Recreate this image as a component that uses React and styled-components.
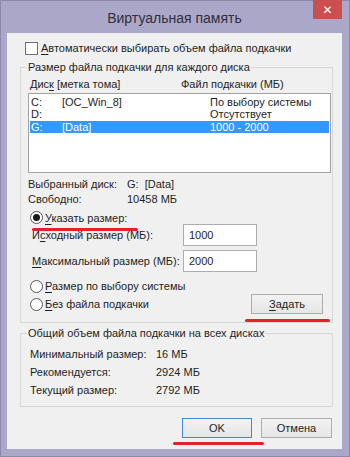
import React from 'react';
import styled, { createGlobalStyle } from 'styled-components';

const GlobalStyle = createGlobalStyle`
  html, body { margin: 0; padding: 0; background: #aba7c8; }
  body {
    font-family: "Liberation Sans", Arial, sans-serif;
    font-size: 11px;
    color: #1e1e1e;
    white-space: nowrap;
  }
  u { text-decoration-thickness: 1px; text-underline-offset: 2px; }
`;

const Window = styled.div`
  width: 350px;
  height: 457px;
  box-sizing: border-box;
  background: #aba7c8;
  border: 1px solid #8d89ad;
  padding: 0 7px 7px 6px;
  display: flex;
  flex-direction: column;
`;

const TitleBar = styled.div`
  height: 32px;
  display: grid;
  grid-template-columns: 1fr auto 1fr;
  align-items: start;
`;

const Title = styled.div`
  grid-column: 2;
  margin-top: 8px;
  font-size: 14px;
  line-height: 18px;
  color: #2f2f3a;
`;

const CloseButton = styled.div`
  grid-column: 3;
  justify-self: end;
  margin-top: -1px;
  width: 29px;
  height: 19px;
  background: #c9504f;
  color: #fff;
  display: flex;
  align-items: center;
  justify-content: center;
  font-family: "DejaVu Sans", sans-serif;
  font-weight: bold;
  font-size: 12px;
`;

const Panel = styled.div`
  flex: 1;
  background: #f0f0f0;
  display: flex;
  flex-direction: column;
`;

const CheckRow = styled.div`
  margin-top: 8px;
  height: 14px;
  padding-left: 18px;
  display: flex;
  align-items: center;
`;

const CheckBox = styled.span`
  width: 11px;
  height: 11px;
  border: 1px solid #707070;
  background: #fff;
  margin-right: 3px;
`;

const Group = styled.div`
  margin: ${p => p.$top}px 9px 0 13px;
  border: 1px solid #d9d9d9;
  padding: 0 0 ${p => p.$bottom}px 7px;
  display: flex;
  flex-direction: column;
`;

const GroupTitle = styled.div`
  margin: -8px 0 0 -1px;
  padding: 0 1px;
  height: 15px;
  line-height: 15px;
  width: fit-content;
  background: #f0f0f0;
`;

const HeaderRow = styled.div`
  margin-top: 2px;
  height: 14px;
  padding-left: 2px;
  display: grid;
  grid-template-columns: 151px 1fr;
  align-items: center;
`;

const ListBox = styled.div`
  margin: 2px 1px 0 0;
  height: 80px;
  box-sizing: border-box;
  background: #fff;
  border: 1px solid #a3a3a3;
  padding: 2px 1px 0;
`;

const ListRow = styled.div`
  height: 12px;
  line-height: 12px;
  padding-left: 1px;
  display: grid;
  grid-template-columns: 31px 148px 1fr;
  background: ${p => (p.$selected ? '#3399ff' : 'transparent')};
  color: ${p => (p.$selected ? '#fff' : 'inherit')};
  margin-top: ${p => (p.$selected ? 1 : 0)}px;
`;

const InfoRow = styled.div`
  height: ${p => p.$h || 15}px;
  display: grid;
  grid-template-columns: ${p => p.$col}px 1fr;
  align-items: center;
  margin-top: ${p => p.$gap || 0}px;
  padding-left: ${p => p.$indent || 0}px;
`;

const RadioRow = styled.div`
  position: relative;
  height: ${p => p.$h}px;
  margin-top: ${p => p.$gap || 0}px;
  padding-left: ${p => (p.$flush ? 0 : 2)}px;
  display: flex;
  align-items: center;
`;

const Radio = styled.span`
  width: 11px;
  height: 11px;
  border-radius: 50%;
  border: 1px solid #555;
  background: #fff;
  margin-right: 2px;
  display: flex;
  align-items: center;
  justify-content: center;
  &::after {
    content: '';
    width: 7px;
    height: 7px;
    border-radius: 50%;
    background: ${p => (p.$checked ? '#1a1a1a' : 'transparent')};
  }
`;

const FieldRow = styled.div`
  height: 22px;
  margin-top: ${p => p.$gap}px;
  padding-left: 4px;
  display: grid;
  grid-template-columns: 151px 74px;
  align-items: center;
`;

const Input = styled.div`
  height: 22px;
  box-sizing: border-box;
  border: 1px solid #abadb3;
  background: #fff;
  padding-left: 5px;
  display: flex;
  align-items: center;
`;

const ActionRow = styled.div`
  height: 20px;
  display: flex;
  align-items: center;
  justify-content: space-between;
  padding-left: 2px;
`;

const Button = styled.div`
  position: relative;
  width: ${p => p.$w}px;
  height: 20px;
  box-sizing: border-box;
  border: 1px solid ${p => (p.$default ? '#3c8ad8' : '#adadad')};
  background: linear-gradient(#f2f2f2, #e6e6e6);
  display: flex;
  align-items: center;
  justify-content: center;
  margin-right: ${p => p.$mr || 0}px;
`;

const Footer = styled.div`
  margin: 11px 10px 0 0;
  display: flex;
  justify-content: flex-end;
  gap: 9px;
`;

const RedMark = styled.span`
  position: absolute;
  left: ${p => p.$left}px;
  top: ${p => p.$top}px;
  width: ${p => p.$width}px;
  height: 3px;
  border-radius: 2px;
  background: #e4202a;
`;

export default function App() {
  return (
    <>
      <GlobalStyle />
      <Window>
        <TitleBar>
          <Title>Виртуальная память</Title>
          <CloseButton>✕</CloseButton>
        </TitleBar>
        <Panel>
          <CheckRow>
            <CheckBox />
            <span><u>А</u>втоматически выбирать объем файла подкачки</span>
          </CheckRow>

          <Group $top={12} $bottom={8}>
            <GroupTitle>Размер файла подкачки для каждого диска</GroupTitle>
            <HeaderRow>
              <span>Дис<u>к</u> [метка тома]</span>
              <span>Файл подкачки (МБ)</span>
            </HeaderRow>
            <ListBox>
              <ListRow><span>C:</span><span>[OC_Win_8]</span><span>По выбору системы</span></ListRow>
              <ListRow><span>D:</span><span></span><span>Отсутствует</span></ListRow>
              <ListRow $selected><span>G:</span><span>[Data]</span><span>1000 - 2000</span></ListRow>
            </ListBox>
            <InfoRow $col={99} $gap={3}>
              <span>Выбранный диск:</span><span>G:&nbsp;&nbsp;[Data]</span>
            </InfoRow>
            <InfoRow $col={99}>
              <span>Свободно:</span><span>10458 МБ</span>
            </InfoRow>
            <RadioRow $h={13} $gap={5}>
              <Radio $checked />
              <span><u>У</u>казать размер:</span>
              <RedMark $left={4} $top={17} $width={106} />
            </RadioRow>
            <FieldRow $gap={0}>
              <span>И<u>с</u>ходный размер (МБ):</span>
              <Input>1000</Input>
            </FieldRow>
            <FieldRow $gap={4}>
              <span><u>М</u>аксимальный размер (МБ):</span>
              <Input>2000</Input>
            </FieldRow>
            <RadioRow $h={16} $gap={6}>
              <Radio />
              <span><u>Р</u>азмер по выбору системы</span>
            </RadioRow>
            <ActionRow>
              <RadioRow $h={20} $flush>
                <Radio />
                <span><u>Б</u>ез файла подкачки</span>
              </RadioRow>
              <Button $w={72} $mr={9}>
                <span><u>З</u>адать</span>
                <RedMark $left={-7} $top={24} $width={85} />
              </Button>
            </ActionRow>
          </Group>

          <Group $top={10} $bottom={7}>
            <GroupTitle>Общий объем файла подкачки на всех дисках</GroupTitle>
            <InfoRow $col={126} $gap={4} $indent={2} $h={18}>
              <span>Минимальный размер:</span><span>16 МБ</span>
            </InfoRow>
            <InfoRow $col={126} $indent={2} $h={18}>
              <span>Рекомендуется:</span><span>2924 МБ</span>
            </InfoRow>
            <InfoRow $col={126} $indent={2} $h={18}>
              <span>Текущий размер:</span><span>2792 МБ</span>
            </InfoRow>
          </Group>

          <Footer>
            <Button $w={70} $default>
              <span>OK</span>
              <RedMark $left={-10} $top={23} $width={91} />
            </Button>
            <Button $w={71}>Отмена</Button>
          </Footer>
        </Panel>
      </Window>
    </>
  );
}
